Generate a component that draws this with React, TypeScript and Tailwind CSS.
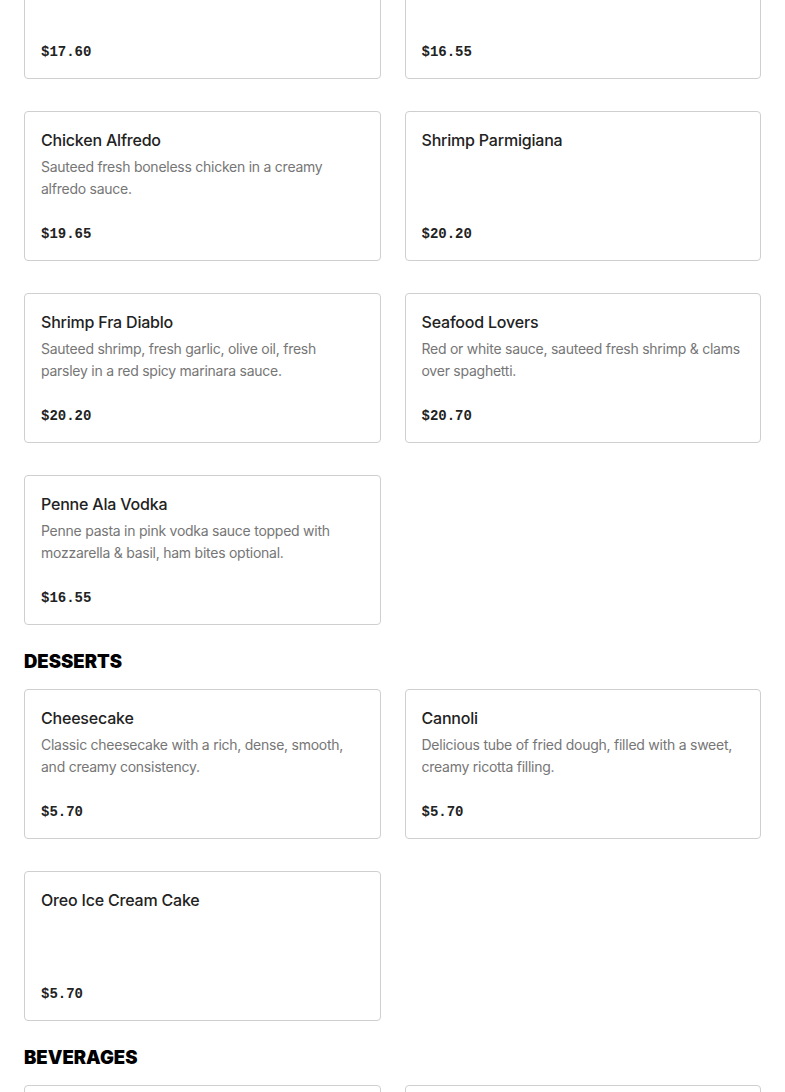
type Item = { name: string; description?: string; price: string };

const pasta: Item[] = [
  { name: "Baked Ziti", price: "$17.60" },
  { name: "Spaghetti & Meatballs", price: "$16.55" },
  {
    name: "Chicken Alfredo",
    description: "Sauteed fresh boneless chicken in a creamy alfredo sauce.",
    price: "$19.65",
  },
  { name: "Shrimp Parmigiana", price: "$20.20" },
  {
    name: "Shrimp Fra Diablo",
    description:
      "Sauteed shrimp, fresh garlic, olive oil, fresh parsley in a red spicy marinara sauce.",
    price: "$20.20",
  },
  {
    name: "Seafood Lovers",
    description: "Red or white sauce, sauteed fresh shrimp & clams over spaghetti.",
    price: "$20.70",
  },
  {
    name: "Penne Ala Vodka",
    description:
      "Penne pasta in pink vodka sauce topped with mozzarella & basil, ham bites optional.",
    price: "$16.55",
  },
];

const desserts: Item[] = [
  {
    name: "Cheesecake",
    description: "Classic cheesecake with a rich, dense, smooth, and creamy consistency.",
    price: "$5.70",
  },
  {
    name: "Cannoli",
    description: "Delicious tube of fried dough, filled with a sweet, creamy ricotta filling.",
    price: "$5.70",
  },
  { name: "Oreo Ice Cream Cake", price: "$5.70" },
];

const beverages: Item[] = [
  { name: "Soda", price: "$2.50" },
  { name: "Water", price: "$1.50" },
];

const MenuCard = ({ item }: { item: Item }) => {
  return (
    <div className="flex flex-col h-[150px] p-4 border border-[#cfcfcf] rounded-[4px] bg-white">
      <h3 className="text-[16px] leading-6 font-medium tracking-[-0.2px] text-[#222]">
        {item.name}
      </h3>
      {item.description && (
        <p className="mt-1 text-[14px] leading-[22px] tracking-[-0.25px] text-[#767676]">
          {item.description}
        </p>
      )}
      <span className="mt-auto text-[14px] leading-5 font-bold text-[#222] font-['Liberation_Mono',monospace]">
        {item.price}
      </span>
    </div>
  );
};

const Section = ({ title, items }: { title?: string; items: Item[] }) => {
  return (
    <section className="mt-6 first:mt-0">
      {title && (
        <h2 className="mb-4 text-[18.5px] leading-6 font-black uppercase text-black">
          {title}
        </h2>
      )}
      <div className="grid grid-cols-2 gap-x-6 gap-y-8">
        {items.map((item) => (
          <MenuCard key={item.name} item={item} />
        ))}
      </div>
    </section>
  );
};

export default function App() {
  return (
    <div className="min-h-screen bg-white font-['Inter','Liberation_Sans',sans-serif] overflow-hidden">
      <div className="px-6 -mt-[71px]">
        <Section items={pasta} />
        <Section title="Desserts" items={desserts} />
        <Section title="Beverages" items={beverages} />
      </div>
    </div>
  );
}
